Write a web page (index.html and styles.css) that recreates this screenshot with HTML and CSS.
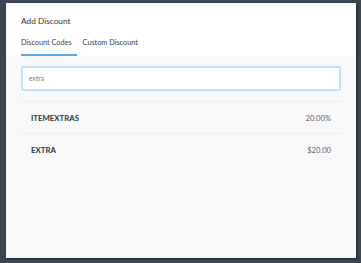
FILE: index.html
```html
<!DOCTYPE html>
<html>
<head>
<meta charset="utf-8">
<link rel="stylesheet" href="styles.css">
</head>
<body>
<div class="modal">
  <div class="header">
    <div class="title">Add Discount</div>
    <div class="tabs">
      <div class="tab active">Discount Codes</div>
      <div class="tab">Custom Discount</div>
    </div>
  </div>
  <div class="content">
    <div class="search">extra</div>
    <div class="list">
      <div class="row"><span class="code">ITEMEXTRAS</span><span class="value">20.00%</span></div>
      <div class="row"><span class="code">EXTRA</span><span class="value">$20.00</span></div>
    </div>
  </div>
</div>
</body>
</html>
```
FILE: styles.css
```css
html, body {
  margin: 0;
  padding: 0;
  height: 100%;
}
body {
  background: #3c4652;
  font-family: "Lato", "Liberation Sans", sans-serif;
  overflow: hidden;
}
.modal {
  margin: 3px 0 0 6px;
  width: 350px;
  height: 255px;
  background: #f8f8fa;
  display: flex;
  flex-direction: column;
  box-shadow: 1px 1px 2px rgba(0,0,0,0.5);
}
.header {
  background: #ffffff;
  padding: 10px 15px 0 15px;
}
.title {
  font-size: 8.3px;
  line-height: 16px;
  color: #33373c;
}
.tabs {
  display: flex;
  gap: 6px;
  margin-top: 2px;
}
.tab {
  font-size: 7.3px;
  line-height: 12px;
  color: #3d4248;
  padding: 6px 0 5px 0;
  border-bottom: 2px solid transparent;
}
.tab.active {
  border-bottom-color: #5aa8e8;
  padding-right: 5px;
}
.content {
  padding: 10px 15px;
}
.search {
  height: 21px;
  background: #ffffff;
  border: 2px solid #c3dff5;
  border-radius: 2px;
  font-size: 6.8px;
  line-height: 21px;
  color: #7a7e84;
  padding-left: 6px;
}
.list {
  margin-top: 10px;
}
.row {
  display: flex;
  justify-content: space-between;
  align-items: center;
  height: 31px;
  border-top: 1px solid #eeeef1;
  padding: 0 10px;
}
.code {
  font-size: 7.8px;
  font-weight: 700;
  color: #2d3136;
}
.value {
  font-size: 7.6px;
  color: #5d6268;
}
```
